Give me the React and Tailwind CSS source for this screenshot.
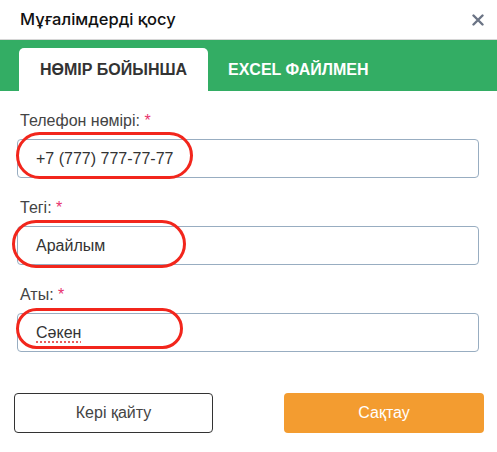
import React from "react";

// Red hand-drawn style highlight drawn over a field.
const Mark = ({ className }) => (
  <div className={`pointer-events-none absolute rounded-full border-[3px] border-[#f2261c] ${className}`} />
);

const Field = ({ label, value, mark, spell }) => (
  <div className="relative">
    <div className="pl-[3px] text-[16px] leading-[18px] text-[#444]">
      {label}: <span className="text-[#e8336d]">*</span>
    </div>
    <div className="mt-[9px] flex h-[39px] items-center rounded-[4px] border border-[#98adc1] px-[18px] text-[16px] text-[#333]">
      <span className={spell ? "underline decoration-dotted decoration-[#e53935] underline-offset-4" : ""}>{value}</span>
    </div>
    <Mark className={mark} />
  </div>
);

export default function App() {
  return (
    <div className="h-[452px] w-[497px] bg-white font-['Liberation_Sans',Arial,sans-serif]">
      {/* header */}
      <div className="flex h-[40px] items-center justify-between border-b border-[#d6d6d6] pl-[20px] pr-[13px]">
        <h1 className="font-['Inter',sans-serif] text-[16.5px] font-medium text-[#111]">Мұғалімдерді қосу</h1>
        <svg width="12" height="12" viewBox="0 0 12 12" className="text-[#6b7485]">
          <path d="M1.5 1.5l9 9M10.5 1.5l-9 9" stroke="currentColor" strokeWidth="2.4" strokeLinecap="round" />
        </svg>
      </div>

      {/* tabs */}
      <div className="flex h-[51px] items-end bg-[#33ad64] pl-[19px]">
        <div className="flex h-[43px] w-[189px] items-center justify-center rounded-t-[5px] bg-white text-[16px] font-bold text-[#333]">
          НӨМІР БОЙЫНША
        </div>
        <div className="flex h-[43px] items-center pl-[20px] text-[16px] font-bold text-white">EXCEL ФАЙЛМЕН</div>
      </div>

      {/* form */}
      <div className="flex flex-col gap-[21px] pl-[17px] pr-[18px] pt-[21px]">
        <Field label="Телефон нөмірі" value="+7 (777) 777-77-77" mark="left-[-1px] top-[20px] h-[47px] w-[177px]" />
        <Field label="Тегі" value="Арайлым" mark="left-[-5px] top-[21px] h-[48px] w-[174px]" />
        <Field label="Аты" value="Сәкен" spell mark="left-[-1px] top-[22px] h-[41px] w-[167px]" />
      </div>

      {/* actions */}
      <div className="mt-[41px] flex justify-between pl-[14px] pr-[13px]">
        <button className="h-[40px] w-[199px] rounded-[4px] border border-[#333] text-[16px] text-[#444]">Кері қайту</button>
        <button className="h-[40px] w-[200px] rounded-[4px] bg-[#f39c30] text-[16px] text-white">Сақтау</button>
      </div>
    </div>
  );
}
